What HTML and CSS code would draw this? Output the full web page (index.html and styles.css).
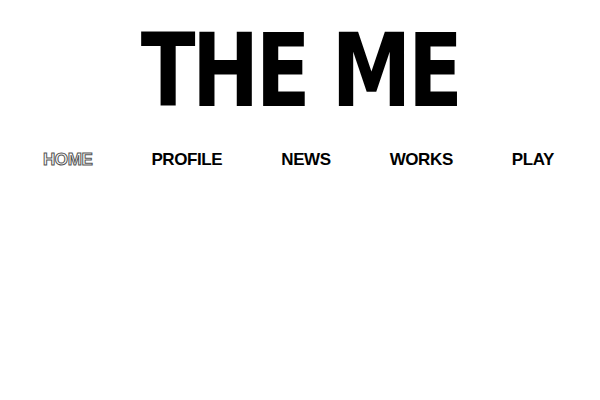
FILE: index.html
```html
<!DOCTYPE html>
<html>
<head>
<meta charset="utf-8">
<link rel="stylesheet" href="styles.css">
</head>
<body>
<header class="masthead">
  <h1 class="logo">THE ME</h1>
</header>
<nav class="nav">
  <a class="nav-item active" href="#">HOME</a>
  <a class="nav-item" href="#">PROFILE</a>
  <a class="nav-item" href="#">NEWS</a>
  <a class="nav-item" href="#">WORKS</a>
  <a class="nav-item" href="#">PLAY</a>
</nav>
</body>
</html>
```
FILE: styles.css
```css
html, body {
  background: #fff;
}
body {
  margin: 8px;
  font-family: "Liberation Sans", Arial, sans-serif;
  color: #000;
}
.masthead {
  display: flex;
  justify-content: center;
  padding-top: 8px;
}
.logo {
  margin: 0;
  font-family: "DejaVu Sans Condensed", "DejaVu Sans", sans-serif;
  font-stretch: condensed;
  font-weight: bold;
  font-size: 102px;
  line-height: 110px;
  letter-spacing: -4px;
  color: #000;
  transform: scaleX(0.875);
}
.nav {
  display: flex;
  justify-content: center;
  gap: 59px;
  margin-top: 23px;
  padding-right: 3px;
}
.nav-item {
  font-weight: bold;
  font-size: 17px;
  letter-spacing: -0.4px;
  line-height: 22px;
  color: #000;
  text-decoration: none;
}
.nav-item.active {
  color: #fff;
  -webkit-text-stroke: 1px #555;
}
```
